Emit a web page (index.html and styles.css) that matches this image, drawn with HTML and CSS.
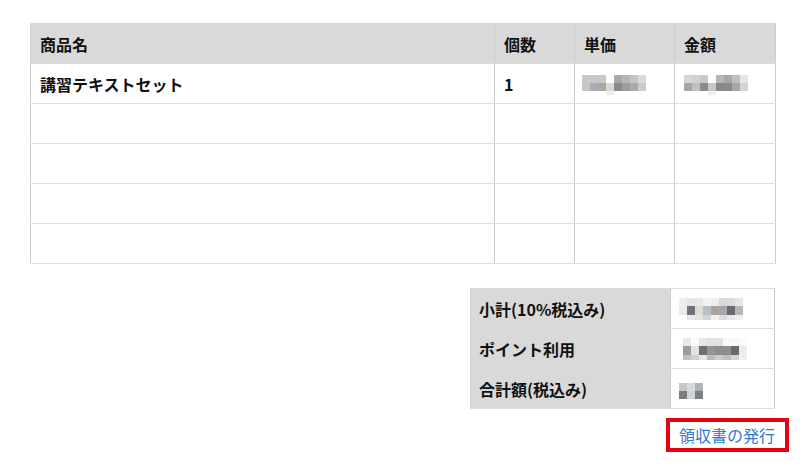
FILE: index.html
```html
<!DOCTYPE html>
<html lang="ja">
<head>
<meta charset="utf-8">
<title>注文明細</title>
<link rel="stylesheet" href="styles.css">
</head>
<body>
<div class="page">
  <table class="items">
    <colgroup>
      <col class="c-name"><col class="c-qty"><col class="c-unit"><col class="c-amount">
    </colgroup>
    <thead>
      <tr><th>商品名</th><th>個数</th><th>単価</th><th>金額</th></tr>
    </thead>
    <tbody>
      <tr>
        <td class="bold">講習テキストセット</td>
        <td class="bold">1</td>
        <td><span class="mosaic m8 shift">
          <i style="background:#c8c8c8"></i><i style="background:#c6c8cc"></i><i style="background:#c9c9c9"></i><i style="background:#fff"></i><i style="background:#a9a9a9"></i><i style="background:#b8b6b4"></i><i style="background:#c4c4c6"></i><i style="background:#d8dadc"></i>
          <i style="background:#ccc6c2"></i><i style="background:#a8aeb6"></i><i style="background:#a8a8a8"></i><i style="background:#d8d8d8"></i><i style="background:#8a8a8c"></i><i style="background:#a09c9a"></i><i style="background:#aaaaac"></i><i style="background:#c8ccd0"></i>
          <i style="background:#fff"></i><i style="background:#fff"></i><i style="background:#fff"></i><i style="background:#eeeeee"></i><i style="background:#fff"></i><i style="background:#fff"></i><i style="background:#fff"></i><i style="background:#fff"></i>
        </span></td>
        <td><span class="mosaic m8">
          <i style="background:#d6d6d6"></i><i style="background:#d0d2d2"></i><i style="background:#c8c8c8"></i><i style="background:#fff"></i><i style="background:#b6b6b8"></i><i style="background:#a8a8a8"></i><i style="background:#c0bebe"></i><i style="background:#e4e6e8"></i>
          <i style="background:#a8a4a2"></i><i style="background:#b8c0c8"></i><i style="background:#8c8c8c"></i><i style="background:#c8c8c4"></i><i style="background:#88888c"></i><i style="background:#8a8a8c"></i><i style="background:#a8a6a6"></i><i style="background:#d0d4d8"></i>
          <i style="background:#fff"></i><i style="background:#fff"></i><i style="background:#fff"></i><i style="background:#eeeeee"></i><i style="background:#fff"></i><i style="background:#fff"></i><i style="background:#fff"></i><i style="background:#fff"></i>
        </span></td>
      </tr>
      <tr><td></td><td></td><td></td><td></td></tr>
      <tr><td></td><td></td><td></td><td></td></tr>
      <tr><td></td><td></td><td></td><td></td></tr>
      <tr><td></td><td></td><td></td><td></td></tr>
    </tbody>
  </table>

  <div class="summary-wrap">
    <table class="summary">
      <tr>
        <th>小計(10%税込み)</th>
        <td><span class="mosaic m8 tall">
          <i style="background:#eeeeee"></i><i style="background:#e4e4e4"></i><i style="background:#e8e8e8"></i><i style="background:#f0f4f8"></i><i style="background:#eeeeec"></i><i style="background:#d8d8da"></i><i style="background:#dcdcde"></i><i style="background:#e4e6e8"></i>
          <i style="background:#eaeae8"></i><i style="background:#707276"></i><i style="background:#e2dcd8"></i><i style="background:#b8bec4"></i><i style="background:#a8a4a0"></i><i style="background:#a4a8ae"></i><i style="background:#6a6a6c"></i><i style="background:#b4b8b8"></i>
          <i style="background:#fff"></i><i style="background:#e8e8ea"></i><i style="background:#e4e4e4"></i><i style="background:#d0d4d8"></i><i style="background:#f0f0f0"></i><i style="background:#dcdcdc"></i><i style="background:#e8e8ea"></i><i style="background:#eeeeee"></i>
        </span></td>
      </tr>
      <tr>
        <th>ポイント利用</th>
        <td><span class="mosaic m8 tall pts">
          <i style="background:#e8e8e8"></i><i style="background:#fafafa"></i><i style="background:#e6e6e6"></i><i style="background:#e0e0e2"></i><i style="background:#e2e2e4"></i><i style="background:#fafafa"></i><i style="background:#f8f8f8"></i><i style="background:#fcfcfc"></i>
          <i style="background:#9c9c9c"></i><i style="background:#e4e2de"></i><i style="background:#6c6e72"></i><i style="background:#949494"></i><i style="background:#908c8a"></i><i style="background:#8c9096"></i><i style="background:#6c6a6c"></i><i style="background:#e8ecee"></i>
          <i style="background:#c0c0c2"></i><i style="background:#d0d0d0"></i><i style="background:#e6e6e6"></i><i style="background:#b8babc"></i><i style="background:#cccccc"></i><i style="background:#c0c0be"></i><i style="background:#d4d4d6"></i><i style="background:#eef0f0"></i>
        </span></td>
      </tr>
      <tr>
        <th>合計額(税込み)</th>
        <td><span class="mosaic m3">
          <i style="background:#c8c8c8"></i><i style="background:#d8d8d8"></i><i style="background:#b0b4b8"></i>
          <i style="background:#7c7c7c"></i><i style="background:#d0d4d4"></i><i style="background:#7c8084"></i>
        </span></td>
      </tr>
    </table>
  </div>

  <div class="actions">
    <a class="receipt-link" href="#">領収書の発行</a>
  </div>
</div>
</body>
</html>
```

FILE: styles.css
```css
html, body {
  margin: 0;
  padding: 0;
  background: #fff;
}

body {
  font-family: "Noto Sans CJK JP", "Noto Sans", sans-serif;
  font-size: 16px;
  color: #111;
}

.page {
  width: 745px;
  padding: 23px 0 0 30px;
}

table {
  border-collapse: collapse;
  table-layout: fixed;
}

.items {
  width: 745px;
}

.c-name { width: 464px; }
.c-qty { width: 80px; }
.c-unit { width: 100px; }
.c-amount { width: 101px; }

.items th,
.items td {
  height: 40px;
  box-sizing: border-box;
  padding: 0 9px;
  text-align: left;
  vertical-align: middle;
  border-left: 1px solid #cccccc;
  border-right: 1px solid #cccccc;
  border-top: 1px solid #dddddd;
  border-bottom: 1px solid #dddddd;
  line-height: 20px;
}

.items th {
  background: #d9d9d9;
  font-weight: bold;
  border-top-color: #d9d9d9;
}

.bold {
  font-weight: bold;
}

.mosaic {
  display: inline-grid;
  grid-auto-rows: 8px;
  vertical-align: middle;
}

.mosaic i {
  display: block;
}

.m8 {
  grid-template-columns: repeat(8, 8px);
  grid-template-rows: 8px 8px 4px;
}

.m8.tall {
  grid-template-rows: 8px 9px 5px;
}

.m3 {
  grid-template-columns: repeat(3, 8px);
  grid-template-rows: 8px 8px;
}

.shift {
  margin-left: -2px;
}

.pts {
  margin-left: 4px;
}

.summary-wrap {
  display: flex;
  justify-content: flex-end;
  margin-top: 24px;
}

.summary {
  width: 305px;
}

.summary th,
.summary td {
  height: 40px;
  box-sizing: border-box;
  padding: 0 8px;
  text-align: left;
  vertical-align: middle;
  border: 1px solid #cccccc;
  border-top-color: #dddddd;
  border-bottom-color: #dddddd;
  line-height: 20px;
}

.summary th {
  width: 200px;
  background: #d9d9d9;
  font-weight: bold;
}

.summary td {
  background: #fff;
}

.actions {
  display: flex;
  justify-content: flex-end;
  margin-top: 9px;
  margin-right: -14px;
}

.receipt-link {
  display: block;
  border: 4px solid #e60012;
  padding: 0 10px 0 9px;
  line-height: 26px;
  color: #2f7bd1;
  text-decoration: none;
  font-size: 16px;
}
```
